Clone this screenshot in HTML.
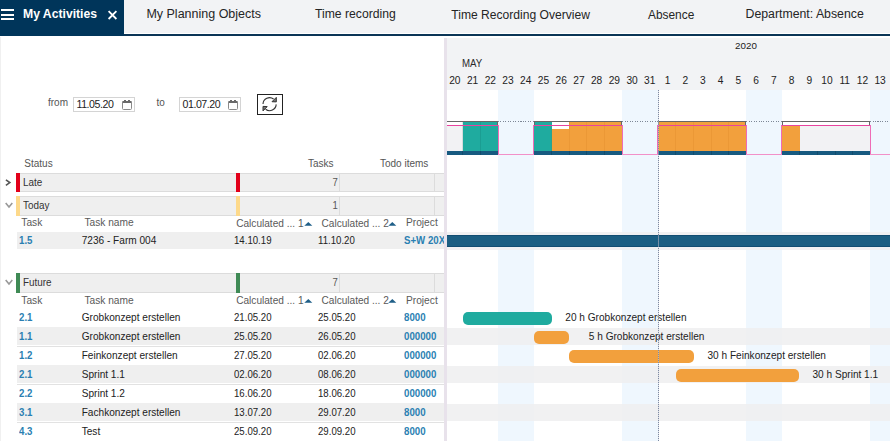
<!DOCTYPE html>
<html><head><meta charset="utf-8"><style>
html,body{margin:0;padding:0;width:890px;height:441px;overflow:hidden;background:#fff;}
body{position:relative;font-family:"Liberation Sans", sans-serif;}
body>div,body>svg{position:absolute;}
</style></head><body>
<div style="left:0.00px;top:0.00px;width:890.00px;height:33.00px;background:#f2f3f5"></div>
<div style="left:0.00px;top:33.00px;width:890.00px;height:1.00px;background:#ffffff"></div>
<div style="left:0.00px;top:34.00px;width:890.00px;height:2.00px;background:#0b3556"></div>
<div style="left:0.00px;top:0.00px;width:124.00px;height:36.00px;background:#00355a"></div>
<div style="left:1.00px;top:9.00px;width:13.00px;height:2.00px;background:#fff"></div>
<div style="left:1.00px;top:13.50px;width:13.00px;height:2.00px;background:#fff"></div>
<div style="left:1.00px;top:18.00px;width:13.00px;height:2.00px;background:#fff"></div>
<div style="left:23.00px;top:7.45px;font-size:12.2px;line-height:14.64px;color:#fff;font-weight:700;white-space:nowrap;">My Activities</div>
<svg style="left:107px;top:10px" width="11" height="10" viewBox="0 0 11 10"><path d="M1.6 1.2 L9.4 9 M9.4 1.2 L1.6 9" stroke="#fff" stroke-width="1.8"/></svg>
<div style="left:146.40px;top:7.17px;font-size:12.5px;line-height:15.0px;color:#252525;font-weight:400;white-space:nowrap;">My Planning Objects</div>
<div style="left:315.00px;top:7.45px;font-size:12.2px;line-height:14.64px;color:#252525;font-weight:400;white-space:nowrap;">Time recording</div>
<div style="left:451.30px;top:7.55px;font-size:12.1px;line-height:14.52px;color:#252525;font-weight:400;white-space:nowrap;">Time Recording Overview</div>
<div style="left:648.00px;top:7.74px;font-size:11.9px;line-height:14.28px;color:#252525;font-weight:400;white-space:nowrap;">Absence</div>
<div style="left:745.50px;top:7.36px;font-size:12.3px;line-height:14.76px;color:#252525;font-weight:400;white-space:nowrap;">Department: Absence</div>
<div style="left:447.00px;top:38.00px;width:443.00px;height:52.00px;background:#f2f3f5"></div>
<div style="left:716.00px;width:60px;text-align:center;top:40.42px;font-size:9.8px;line-height:11.76px;color:#222;font-weight:400;white-space:nowrap;">2020</div>
<div style="left:461.50px;top:57.56px;font-size:10.4px;line-height:12.48px;color:#2a2a2a;font-weight:400;white-space:nowrap;transform:scaleX(0.93);transform-origin:0 0">MAY</div>
<div style="left:424.86px;width:60px;text-align:center;top:74.85px;font-size:10.2px;line-height:12.24px;color:#222;font-weight:400;white-space:nowrap;">20</div>
<div style="left:442.58px;width:60px;text-align:center;top:74.85px;font-size:10.2px;line-height:12.24px;color:#222;font-weight:400;white-space:nowrap;">21</div>
<div style="left:460.30px;width:60px;text-align:center;top:74.85px;font-size:10.2px;line-height:12.24px;color:#222;font-weight:400;white-space:nowrap;">22</div>
<div style="left:478.02px;width:60px;text-align:center;top:74.85px;font-size:10.2px;line-height:12.24px;color:#222;font-weight:400;white-space:nowrap;">23</div>
<div style="left:495.74px;width:60px;text-align:center;top:74.85px;font-size:10.2px;line-height:12.24px;color:#222;font-weight:400;white-space:nowrap;">24</div>
<div style="left:513.46px;width:60px;text-align:center;top:74.85px;font-size:10.2px;line-height:12.24px;color:#222;font-weight:400;white-space:nowrap;">25</div>
<div style="left:531.18px;width:60px;text-align:center;top:74.85px;font-size:10.2px;line-height:12.24px;color:#222;font-weight:400;white-space:nowrap;">26</div>
<div style="left:548.90px;width:60px;text-align:center;top:74.85px;font-size:10.2px;line-height:12.24px;color:#222;font-weight:400;white-space:nowrap;">27</div>
<div style="left:566.62px;width:60px;text-align:center;top:74.85px;font-size:10.2px;line-height:12.24px;color:#222;font-weight:400;white-space:nowrap;">28</div>
<div style="left:584.34px;width:60px;text-align:center;top:74.85px;font-size:10.2px;line-height:12.24px;color:#222;font-weight:400;white-space:nowrap;">29</div>
<div style="left:602.06px;width:60px;text-align:center;top:74.85px;font-size:10.2px;line-height:12.24px;color:#222;font-weight:400;white-space:nowrap;">30</div>
<div style="left:619.78px;width:60px;text-align:center;top:74.85px;font-size:10.2px;line-height:12.24px;color:#222;font-weight:400;white-space:nowrap;">31</div>
<div style="left:637.50px;width:60px;text-align:center;top:74.85px;font-size:10.2px;line-height:12.24px;color:#222;font-weight:400;white-space:nowrap;">1</div>
<div style="left:655.22px;width:60px;text-align:center;top:74.85px;font-size:10.2px;line-height:12.24px;color:#222;font-weight:400;white-space:nowrap;">2</div>
<div style="left:672.94px;width:60px;text-align:center;top:74.85px;font-size:10.2px;line-height:12.24px;color:#222;font-weight:400;white-space:nowrap;">3</div>
<div style="left:690.66px;width:60px;text-align:center;top:74.85px;font-size:10.2px;line-height:12.24px;color:#222;font-weight:400;white-space:nowrap;">4</div>
<div style="left:708.38px;width:60px;text-align:center;top:74.85px;font-size:10.2px;line-height:12.24px;color:#222;font-weight:400;white-space:nowrap;">5</div>
<div style="left:726.10px;width:60px;text-align:center;top:74.85px;font-size:10.2px;line-height:12.24px;color:#222;font-weight:400;white-space:nowrap;">6</div>
<div style="left:743.82px;width:60px;text-align:center;top:74.85px;font-size:10.2px;line-height:12.24px;color:#222;font-weight:400;white-space:nowrap;">7</div>
<div style="left:761.54px;width:60px;text-align:center;top:74.85px;font-size:10.2px;line-height:12.24px;color:#222;font-weight:400;white-space:nowrap;">8</div>
<div style="left:779.26px;width:60px;text-align:center;top:74.85px;font-size:10.2px;line-height:12.24px;color:#222;font-weight:400;white-space:nowrap;">9</div>
<div style="left:796.98px;width:60px;text-align:center;top:74.85px;font-size:10.2px;line-height:12.24px;color:#222;font-weight:400;white-space:nowrap;">10</div>
<div style="left:814.70px;width:60px;text-align:center;top:74.85px;font-size:10.2px;line-height:12.24px;color:#222;font-weight:400;white-space:nowrap;">11</div>
<div style="left:832.42px;width:60px;text-align:center;top:74.85px;font-size:10.2px;line-height:12.24px;color:#222;font-weight:400;white-space:nowrap;">12</div>
<div style="left:850.14px;width:60px;text-align:center;top:74.85px;font-size:10.2px;line-height:12.24px;color:#222;font-weight:400;white-space:nowrap;">13</div>
<div style="left:498.36px;top:90.00px;width:35.44px;height:351.00px;background:#eff7fe"></div>
<div style="left:622.40px;top:90.00px;width:35.44px;height:351.00px;background:#eff7fe"></div>
<div style="left:746.44px;top:90.00px;width:35.44px;height:351.00px;background:#eff7fe"></div>
<div style="left:870.48px;top:90.00px;width:35.44px;height:351.00px;background:#eff7fe"></div>
<div style="left:0.00px;top:37.00px;width:1.00px;height:404.00px;background:#f0f0f0"></div>
<div style="left:48.00px;top:97.03px;font-size:10px;line-height:12.0px;color:#555;font-weight:400;white-space:nowrap;">from</div>
<div style="left:73.00px;top:97.00px;width:62.00px;height:15.00px;border:1px solid #d4d4d4;box-sizing:border-box;background:#fff"></div>
<div style="left:76.50px;top:98.27px;font-size:10.6px;line-height:12.72px;color:#222;font-weight:400;white-space:nowrap;letter-spacing:-0.45px">11.05.20</div>
<svg style="left:122px;top:100px" width="10" height="10" viewBox="0 0 10 10"><rect x="0.5" y="1.5" width="9" height="8" rx="1" fill="none" stroke="#8a8a8a" stroke-width="1"/><rect x="0.5" y="1" width="9" height="2" fill="#6a6a6a"/><rect x="2" y="0" width="2" height="1.5" fill="#6a6a6a"/><rect x="6" y="0" width="2" height="1.5" fill="#6a6a6a"/></svg>
<div style="left:156.60px;top:97.03px;font-size:10px;line-height:12.0px;color:#555;font-weight:400;white-space:nowrap;">to</div>
<div style="left:179.00px;top:97.00px;width:62.00px;height:15.00px;border:1px solid #d4d4d4;box-sizing:border-box;background:#fff"></div>
<div style="left:182.50px;top:98.27px;font-size:10.6px;line-height:12.72px;color:#222;font-weight:400;white-space:nowrap;letter-spacing:-0.45px">01.07.20</div>
<svg style="left:228px;top:100px" width="10" height="10" viewBox="0 0 10 10"><rect x="0.5" y="1.5" width="9" height="8" rx="1" fill="none" stroke="#8a8a8a" stroke-width="1"/><rect x="0.5" y="1" width="9" height="2" fill="#6a6a6a"/><rect x="2" y="0" width="2" height="1.5" fill="#6a6a6a"/><rect x="6" y="0" width="2" height="1.5" fill="#6a6a6a"/></svg>
<div style="left:257.00px;top:94.00px;width:26.00px;height:21.00px;border:1px solid #222;box-sizing:border-box;background:#fff"></div>
<svg style="left:257px;top:94px" width="26" height="21" viewBox="0 0 26 21"><path d="M6.0 10.0 A6.6 6.6 0 0 1 16.6 5.0" fill="none" stroke="#333" stroke-width="1.1"/><path d="M19.3 3.4 L19.3 7.9 L15.0 7.7 Z" fill="#777" stroke="#333" stroke-width="1" stroke-linejoin="round"/><path d="M19.2 10.4 A6.6 6.6 0 0 1 8.6 15.3" fill="none" stroke="#333" stroke-width="1.1"/><path d="M6.0 12.4 L10.2 12.6 L6.0 16.9 Z" fill="#777" stroke="#333" stroke-width="1" stroke-linejoin="round"/></svg>
<div style="left:24.30px;top:157.94px;font-size:10px;line-height:12.0px;color:#555;font-weight:400;white-space:nowrap;">Status</div>
<div style="left:308.00px;top:157.94px;font-size:10px;line-height:12.0px;color:#555;font-weight:400;white-space:nowrap;">Tasks</div>
<div style="left:380.00px;top:157.94px;font-size:10px;line-height:12.0px;color:#555;font-weight:400;white-space:nowrap;">Todo items</div>
<svg style="left:5px;top:179px" width="7" height="8" viewBox="0 0 7 8"><path d="M0.9 0.9 L4.8 3.6 L0.9 6.3" fill="none" stroke="#555" stroke-width="1.6"/></svg>
<div style="left:20.00px;top:173.00px;width:424.00px;height:19.00px;background:#efefef;border-top:1px solid #dcdcdc;border-bottom:1px solid #dcdcdc;box-sizing:border-box"></div>
<div style="left:16.00px;top:173.00px;width:4.00px;height:19.00px;background:#e2001a"></div>
<div style="left:236.00px;top:173.00px;width:3.50px;height:19.00px;background:#e2001a"></div>
<div style="left:339.00px;top:173.00px;width:1.00px;height:19.00px;background:#dcdcdc"></div>
<div style="left:434.00px;top:173.00px;width:1.00px;height:19.00px;background:#dcdcdc"></div>
<div style="left:22.60px;top:176.76px;font-size:10.4px;line-height:12.48px;color:#333;font-weight:400;white-space:nowrap;transform:scaleX(0.95);transform-origin:0 0">Late</div>
<div style="right:552.50px;text-align:right;top:176.17px;font-size:10.6px;line-height:12.72px;color:#555;font-weight:400;white-space:nowrap;transform:scaleX(0.9);transform-origin:100% 0">7</div>
<svg style="left:5px;top:202px" width="8" height="7" viewBox="0 0 8 7"><path d="M0.7 0.9 L4 4.9 L7.3 0.9" fill="none" stroke="#999" stroke-width="1.6"/></svg>
<div style="left:20.00px;top:196.00px;width:424.00px;height:20.00px;background:#efefef;border-top:1px solid #dcdcdc;border-bottom:1px solid #dcdcdc;box-sizing:border-box"></div>
<div style="left:16.00px;top:196.00px;width:4.00px;height:20.00px;background:#fdd98a"></div>
<div style="left:236.00px;top:196.00px;width:3.50px;height:20.00px;background:#fdd98a"></div>
<div style="left:339.00px;top:196.00px;width:1.00px;height:20.00px;background:#dcdcdc"></div>
<div style="left:434.00px;top:196.00px;width:1.00px;height:20.00px;background:#dcdcdc"></div>
<div style="left:22.60px;top:199.76px;font-size:10.4px;line-height:12.48px;color:#333;font-weight:400;white-space:nowrap;transform:scaleX(0.95);transform-origin:0 0">Today</div>
<div style="right:552.50px;text-align:right;top:199.17px;font-size:10.6px;line-height:12.72px;color:#555;font-weight:400;white-space:nowrap;transform:scaleX(0.9);transform-origin:100% 0">1</div>
<svg style="left:5px;top:279px" width="8" height="7" viewBox="0 0 8 7"><path d="M0.7 0.9 L4 4.9 L7.3 0.9" fill="none" stroke="#999" stroke-width="1.6"/></svg>
<div style="left:20.00px;top:273.00px;width:424.00px;height:20.00px;background:#efefef;border-top:1px solid #dcdcdc;border-bottom:1px solid #dcdcdc;box-sizing:border-box"></div>
<div style="left:16.00px;top:273.00px;width:4.00px;height:20.00px;background:#3f8a55"></div>
<div style="left:236.00px;top:273.00px;width:3.50px;height:20.00px;background:#3f8a55"></div>
<div style="left:339.00px;top:273.00px;width:1.00px;height:20.00px;background:#dcdcdc"></div>
<div style="left:434.00px;top:273.00px;width:1.00px;height:20.00px;background:#dcdcdc"></div>
<div style="left:22.60px;top:276.76px;font-size:10.4px;line-height:12.48px;color:#333;font-weight:400;white-space:nowrap;transform:scaleX(0.95);transform-origin:0 0">Future</div>
<div style="right:552.50px;text-align:right;top:276.17px;font-size:10.6px;line-height:12.72px;color:#555;font-weight:400;white-space:nowrap;transform:scaleX(0.9);transform-origin:100% 0">7</div>
<div style="left:21.30px;top:217.45px;font-size:10.2px;line-height:12.24px;color:#5a5a5a;font-weight:400;white-space:nowrap;">Task</div>
<div style="left:84.40px;top:217.45px;font-size:10.2px;line-height:12.24px;color:#5a5a5a;font-weight:400;white-space:nowrap;">Task name</div>
<div style="left:236.20px;top:217.54px;font-size:10.1px;line-height:12.12px;color:#5a5a5a;font-weight:400;white-space:nowrap;">Calculated ... 1</div>
<div style="left:321.50px;top:217.54px;font-size:10.1px;line-height:12.12px;color:#5a5a5a;font-weight:400;white-space:nowrap;">Calculated ... 2</div>
<div style="left:406.00px;top:217.45px;font-size:10.2px;line-height:12.24px;color:#5a5a5a;font-weight:400;white-space:nowrap;">Project</div>
<svg style="left:304px;top:221.50px" width="9" height="4" viewBox="0 0 9 4"><path d="M0.3 3.8 L4.3 0 L8.3 3.8 Z" fill="#1f5f88"/></svg>
<svg style="left:388px;top:221.50px" width="9" height="4" viewBox="0 0 9 4"><path d="M0.3 3.8 L4.3 0 L8.3 3.8 Z" fill="#1f5f88"/></svg>
<div style="left:21.30px;top:294.95px;font-size:10.2px;line-height:12.24px;color:#5a5a5a;font-weight:400;white-space:nowrap;">Task</div>
<div style="left:84.40px;top:294.95px;font-size:10.2px;line-height:12.24px;color:#5a5a5a;font-weight:400;white-space:nowrap;">Task name</div>
<div style="left:236.20px;top:295.04px;font-size:10.1px;line-height:12.12px;color:#5a5a5a;font-weight:400;white-space:nowrap;">Calculated ... 1</div>
<div style="left:321.50px;top:295.04px;font-size:10.1px;line-height:12.12px;color:#5a5a5a;font-weight:400;white-space:nowrap;">Calculated ... 2</div>
<div style="left:406.00px;top:294.95px;font-size:10.2px;line-height:12.24px;color:#5a5a5a;font-weight:400;white-space:nowrap;">Project</div>
<svg style="left:304px;top:299.00px" width="9" height="4" viewBox="0 0 9 4"><path d="M0.3 3.8 L4.3 0 L8.3 3.8 Z" fill="#1f5f88"/></svg>
<svg style="left:388px;top:299.00px" width="9" height="4" viewBox="0 0 9 4"><path d="M0.3 3.8 L4.3 0 L8.3 3.8 Z" fill="#1f5f88"/></svg>
<div style="left:17.00px;top:232.00px;width:427.00px;height:17.00px;background:#efefef"></div>
<div style="left:447.00px;top:232.00px;width:443.00px;height:18.00px;background:rgba(239,239,240,0.85)"></div>
<div style="left:19.40px;top:234.29px;font-size:11px;line-height:13.2px;color:#2a7fb2;font-weight:700;white-space:nowrap;transform:scaleX(0.88);transform-origin:0 0">1.5</div>
<div style="left:81.70px;top:234.74px;font-size:10.1px;line-height:12.12px;color:#222;font-weight:400;white-space:nowrap;">7236 - Farm 004</div>
<div style="left:234.20px;top:234.28px;font-size:10.9px;line-height:13.08px;color:#222;font-weight:400;white-space:nowrap;transform:scaleX(0.885);transform-origin:0 0">14.10.19</div>
<div style="left:318.20px;top:234.28px;font-size:10.9px;line-height:13.08px;color:#222;font-weight:400;white-space:nowrap;transform:scaleX(0.885);transform-origin:0 0">11.10.20</div>
<div style="left:403.6px;top:233.30px;width:40.4px;height:15px;overflow:hidden;white-space:nowrap"><div style="position:absolute;left:0;top:0;font-size:11px;line-height:15px;color:#2a7fb2;font-weight:700;transform:scaleX(0.88);transform-origin:0 0">S+W 20X</div></div>
<div style="left:19.40px;top:311.29px;font-size:11px;line-height:13.2px;color:#2a7fb2;font-weight:700;white-space:nowrap;transform:scaleX(0.88);transform-origin:0 0">2.1</div>
<div style="left:81.70px;top:311.74px;font-size:10.1px;line-height:12.12px;color:#222;font-weight:400;white-space:nowrap;">Grobkonzept erstellen</div>
<div style="left:234.20px;top:311.28px;font-size:10.9px;line-height:13.08px;color:#222;font-weight:400;white-space:nowrap;transform:scaleX(0.885);transform-origin:0 0">21.05.20</div>
<div style="left:318.20px;top:311.28px;font-size:10.9px;line-height:13.08px;color:#222;font-weight:400;white-space:nowrap;transform:scaleX(0.885);transform-origin:0 0">25.05.20</div>
<div style="left:403.6px;top:310.30px;width:40.4px;height:15px;overflow:hidden;white-space:nowrap"><div style="position:absolute;left:0;top:0;font-size:11px;line-height:15px;color:#2a7fb2;font-weight:700;transform:scaleX(0.88);transform-origin:0 0">8000</div></div>
<div style="left:17.00px;top:327.00px;width:427.00px;height:18.00px;background:#efefef"></div>
<div style="left:447.00px;top:328.00px;width:443.00px;height:17.00px;background:rgba(239,239,240,0.85)"></div>
<div style="left:19.40px;top:330.29px;font-size:11px;line-height:13.2px;color:#2a7fb2;font-weight:700;white-space:nowrap;transform:scaleX(0.88);transform-origin:0 0">1.1</div>
<div style="left:81.70px;top:330.74px;font-size:10.1px;line-height:12.12px;color:#222;font-weight:400;white-space:nowrap;">Grobkonzept erstellen</div>
<div style="left:234.20px;top:330.28px;font-size:10.9px;line-height:13.08px;color:#222;font-weight:400;white-space:nowrap;transform:scaleX(0.885);transform-origin:0 0">25.05.20</div>
<div style="left:318.20px;top:330.28px;font-size:10.9px;line-height:13.08px;color:#222;font-weight:400;white-space:nowrap;transform:scaleX(0.885);transform-origin:0 0">26.05.20</div>
<div style="left:403.6px;top:329.30px;width:40.4px;height:15px;overflow:hidden;white-space:nowrap"><div style="position:absolute;left:0;top:0;font-size:11px;line-height:15px;color:#2a7fb2;font-weight:700;transform:scaleX(0.88);transform-origin:0 0">000000</div></div>
<div style="left:17.00px;top:346.00px;width:427.00px;height:1.00px;background:#e2e2e2"></div>
<div style="left:19.40px;top:349.29px;font-size:11px;line-height:13.2px;color:#2a7fb2;font-weight:700;white-space:nowrap;transform:scaleX(0.88);transform-origin:0 0">1.2</div>
<div style="left:81.70px;top:349.74px;font-size:10.1px;line-height:12.12px;color:#222;font-weight:400;white-space:nowrap;">Feinkonzept erstellen</div>
<div style="left:234.20px;top:349.28px;font-size:10.9px;line-height:13.08px;color:#222;font-weight:400;white-space:nowrap;transform:scaleX(0.885);transform-origin:0 0">27.05.20</div>
<div style="left:318.20px;top:349.28px;font-size:10.9px;line-height:13.08px;color:#222;font-weight:400;white-space:nowrap;transform:scaleX(0.885);transform-origin:0 0">02.06.20</div>
<div style="left:403.6px;top:348.30px;width:40.4px;height:15px;overflow:hidden;white-space:nowrap"><div style="position:absolute;left:0;top:0;font-size:11px;line-height:15px;color:#2a7fb2;font-weight:700;transform:scaleX(0.88);transform-origin:0 0">000000</div></div>
<div style="left:17.00px;top:365.00px;width:427.00px;height:18.00px;background:#efefef"></div>
<div style="left:447.00px;top:366.00px;width:443.00px;height:17.00px;background:rgba(239,239,240,0.85)"></div>
<div style="left:19.40px;top:368.29px;font-size:11px;line-height:13.2px;color:#2a7fb2;font-weight:700;white-space:nowrap;transform:scaleX(0.88);transform-origin:0 0">2.1</div>
<div style="left:81.70px;top:368.74px;font-size:10.1px;line-height:12.12px;color:#222;font-weight:400;white-space:nowrap;">Sprint 1.1</div>
<div style="left:234.20px;top:368.28px;font-size:10.9px;line-height:13.08px;color:#222;font-weight:400;white-space:nowrap;transform:scaleX(0.885);transform-origin:0 0">02.06.20</div>
<div style="left:318.20px;top:368.28px;font-size:10.9px;line-height:13.08px;color:#222;font-weight:400;white-space:nowrap;transform:scaleX(0.885);transform-origin:0 0">08.06.20</div>
<div style="left:403.6px;top:367.30px;width:40.4px;height:15px;overflow:hidden;white-space:nowrap"><div style="position:absolute;left:0;top:0;font-size:11px;line-height:15px;color:#2a7fb2;font-weight:700;transform:scaleX(0.88);transform-origin:0 0">000000</div></div>
<div style="left:17.00px;top:384.00px;width:427.00px;height:1.00px;background:#e2e2e2"></div>
<div style="left:19.40px;top:387.29px;font-size:11px;line-height:13.2px;color:#2a7fb2;font-weight:700;white-space:nowrap;transform:scaleX(0.88);transform-origin:0 0">2.2</div>
<div style="left:81.70px;top:387.74px;font-size:10.1px;line-height:12.12px;color:#222;font-weight:400;white-space:nowrap;">Sprint 1.2</div>
<div style="left:234.20px;top:387.28px;font-size:10.9px;line-height:13.08px;color:#222;font-weight:400;white-space:nowrap;transform:scaleX(0.885);transform-origin:0 0">16.06.20</div>
<div style="left:318.20px;top:387.28px;font-size:10.9px;line-height:13.08px;color:#222;font-weight:400;white-space:nowrap;transform:scaleX(0.885);transform-origin:0 0">18.06.20</div>
<div style="left:403.6px;top:386.30px;width:40.4px;height:15px;overflow:hidden;white-space:nowrap"><div style="position:absolute;left:0;top:0;font-size:11px;line-height:15px;color:#2a7fb2;font-weight:700;transform:scaleX(0.88);transform-origin:0 0">000000</div></div>
<div style="left:17.00px;top:403.00px;width:427.00px;height:18.00px;background:#efefef"></div>
<div style="left:447.00px;top:404.00px;width:443.00px;height:17.00px;background:rgba(239,239,240,0.85)"></div>
<div style="left:19.40px;top:406.29px;font-size:11px;line-height:13.2px;color:#2a7fb2;font-weight:700;white-space:nowrap;transform:scaleX(0.88);transform-origin:0 0">3.1</div>
<div style="left:81.70px;top:406.74px;font-size:10.1px;line-height:12.12px;color:#222;font-weight:400;white-space:nowrap;">Fachkonzept erstellen</div>
<div style="left:234.20px;top:406.28px;font-size:10.9px;line-height:13.08px;color:#222;font-weight:400;white-space:nowrap;transform:scaleX(0.885);transform-origin:0 0">13.07.20</div>
<div style="left:318.20px;top:406.28px;font-size:10.9px;line-height:13.08px;color:#222;font-weight:400;white-space:nowrap;transform:scaleX(0.885);transform-origin:0 0">29.07.20</div>
<div style="left:403.6px;top:405.30px;width:40.4px;height:15px;overflow:hidden;white-space:nowrap"><div style="position:absolute;left:0;top:0;font-size:11px;line-height:15px;color:#2a7fb2;font-weight:700;transform:scaleX(0.88);transform-origin:0 0">8000</div></div>
<div style="left:17.00px;top:422.00px;width:427.00px;height:1.00px;background:#e2e2e2"></div>
<div style="left:19.40px;top:425.29px;font-size:11px;line-height:13.2px;color:#2a7fb2;font-weight:700;white-space:nowrap;transform:scaleX(0.88);transform-origin:0 0">4.3</div>
<div style="left:81.70px;top:425.74px;font-size:10.1px;line-height:12.12px;color:#222;font-weight:400;white-space:nowrap;">Test</div>
<div style="left:234.20px;top:425.28px;font-size:10.9px;line-height:13.08px;color:#222;font-weight:400;white-space:nowrap;transform:scaleX(0.885);transform-origin:0 0">25.09.20</div>
<div style="left:318.20px;top:425.28px;font-size:10.9px;line-height:13.08px;color:#222;font-weight:400;white-space:nowrap;transform:scaleX(0.885);transform-origin:0 0">29.09.20</div>
<div style="left:403.6px;top:424.30px;width:40.4px;height:15px;overflow:hidden;white-space:nowrap"><div style="position:absolute;left:0;top:0;font-size:11px;line-height:15px;color:#2a7fb2;font-weight:700;transform:scaleX(0.88);transform-origin:0 0">8000</div></div>
<div style="left:447.00px;top:121.00px;width:51.36px;height:35.00px;background:#fff"></div>
<div style="left:447.00px;top:126.00px;width:15.92px;height:25.00px;background:#f2f2f4"></div>
<div style="left:462.92px;top:122.00px;width:17.72px;height:29.00px;background:#1fab9f"></div>
<div style="left:462.42px;top:122.00px;width:1.00px;height:29.00px;background:rgba(0,60,60,0.12)"></div>
<div style="left:480.64px;top:122.00px;width:17.72px;height:29.00px;background:#1fab9f"></div>
<div style="left:480.14px;top:122.00px;width:1.00px;height:29.00px;background:rgba(0,60,60,0.12)"></div>
<div style="left:447.00px;top:151.00px;width:51.36px;height:4.00px;background:#175a80"></div>
<div style="left:462.42px;top:151.00px;width:1.00px;height:4.00px;background:rgba(0,0,0,0.15)"></div>
<div style="left:480.14px;top:151.00px;width:1.00px;height:4.00px;background:rgba(0,0,0,0.15)"></div>
<div style="left:447.00px;top:121.00px;width:51.36px;height:1.00px;background:#666"></div>
<div style="left:497.36px;top:121.00px;width:1.00px;height:5.00px;background:#666"></div>
<div style="left:447.00px;top:125.00px;width:51.36px;height:1.00px;background:#e8449e"></div>
<div style="left:533.80px;top:121.00px;width:88.60px;height:35.00px;background:#fff"></div>
<div style="left:533.80px;top:122.00px;width:17.72px;height:29.00px;background:#1fab9f"></div>
<div style="left:551.52px;top:129.00px;width:17.72px;height:22.00px;background:#f2a03d"></div>
<div style="left:551.02px;top:129.00px;width:1.00px;height:22.00px;background:rgba(180,90,0,0.10)"></div>
<div style="left:569.24px;top:122.00px;width:17.72px;height:29.00px;background:#f2a03d"></div>
<div style="left:568.74px;top:122.00px;width:1.00px;height:29.00px;background:rgba(180,90,0,0.10)"></div>
<div style="left:586.96px;top:122.00px;width:17.72px;height:29.00px;background:#f2a03d"></div>
<div style="left:586.46px;top:122.00px;width:1.00px;height:29.00px;background:rgba(180,90,0,0.10)"></div>
<div style="left:604.68px;top:122.00px;width:17.72px;height:29.00px;background:#f2a03d"></div>
<div style="left:604.18px;top:122.00px;width:1.00px;height:29.00px;background:rgba(180,90,0,0.10)"></div>
<div style="left:533.80px;top:151.00px;width:88.60px;height:4.00px;background:#175a80"></div>
<div style="left:551.02px;top:151.00px;width:1.00px;height:4.00px;background:rgba(0,0,0,0.15)"></div>
<div style="left:568.74px;top:151.00px;width:1.00px;height:4.00px;background:rgba(0,0,0,0.15)"></div>
<div style="left:586.46px;top:151.00px;width:1.00px;height:4.00px;background:rgba(0,0,0,0.15)"></div>
<div style="left:604.18px;top:151.00px;width:1.00px;height:4.00px;background:rgba(0,0,0,0.15)"></div>
<div style="left:533.80px;top:121.00px;width:88.60px;height:1.00px;background:#666"></div>
<div style="left:533.80px;top:121.00px;width:1.00px;height:5.00px;background:#666"></div>
<div style="left:621.40px;top:121.00px;width:1.00px;height:5.00px;background:#666"></div>
<div style="left:533.80px;top:125.00px;width:88.60px;height:1.00px;background:#e8449e"></div>
<div style="left:657.84px;top:121.00px;width:88.60px;height:35.00px;background:#fff"></div>
<div style="left:657.84px;top:122.00px;width:17.72px;height:29.00px;background:#f2a03d"></div>
<div style="left:675.56px;top:122.00px;width:17.72px;height:29.00px;background:#f2a03d"></div>
<div style="left:675.06px;top:122.00px;width:1.00px;height:29.00px;background:rgba(180,90,0,0.10)"></div>
<div style="left:693.28px;top:122.00px;width:17.72px;height:29.00px;background:#f2a03d"></div>
<div style="left:692.78px;top:122.00px;width:1.00px;height:29.00px;background:rgba(180,90,0,0.10)"></div>
<div style="left:711.00px;top:122.00px;width:17.72px;height:29.00px;background:#f2a03d"></div>
<div style="left:710.50px;top:122.00px;width:1.00px;height:29.00px;background:rgba(180,90,0,0.10)"></div>
<div style="left:728.72px;top:122.00px;width:17.72px;height:29.00px;background:#f2a03d"></div>
<div style="left:728.22px;top:122.00px;width:1.00px;height:29.00px;background:rgba(180,90,0,0.10)"></div>
<div style="left:657.84px;top:151.00px;width:88.60px;height:4.00px;background:#175a80"></div>
<div style="left:675.06px;top:151.00px;width:1.00px;height:4.00px;background:rgba(0,0,0,0.15)"></div>
<div style="left:692.78px;top:151.00px;width:1.00px;height:4.00px;background:rgba(0,0,0,0.15)"></div>
<div style="left:710.50px;top:151.00px;width:1.00px;height:4.00px;background:rgba(0,0,0,0.15)"></div>
<div style="left:728.22px;top:151.00px;width:1.00px;height:4.00px;background:rgba(0,0,0,0.15)"></div>
<div style="left:657.84px;top:121.00px;width:88.60px;height:1.00px;background:#666"></div>
<div style="left:657.84px;top:121.00px;width:1.00px;height:5.00px;background:#666"></div>
<div style="left:745.44px;top:121.00px;width:1.00px;height:5.00px;background:#666"></div>
<div style="left:657.84px;top:125.00px;width:88.60px;height:1.00px;background:#e8449e"></div>
<div style="left:781.88px;top:121.00px;width:88.60px;height:35.00px;background:#fff"></div>
<div style="left:781.88px;top:126.00px;width:17.72px;height:25.00px;background:#f2a03d"></div>
<div style="left:799.60px;top:126.00px;width:17.72px;height:25.00px;background:#f2f2f4"></div>
<div style="left:817.32px;top:126.00px;width:17.72px;height:25.00px;background:#f2f2f4"></div>
<div style="left:835.04px;top:126.00px;width:17.72px;height:25.00px;background:#f2f2f4"></div>
<div style="left:852.76px;top:126.00px;width:17.72px;height:25.00px;background:#f2f2f4"></div>
<div style="left:781.88px;top:151.00px;width:88.60px;height:4.00px;background:#175a80"></div>
<div style="left:799.10px;top:151.00px;width:1.00px;height:4.00px;background:rgba(0,0,0,0.15)"></div>
<div style="left:816.82px;top:151.00px;width:1.00px;height:4.00px;background:rgba(0,0,0,0.15)"></div>
<div style="left:834.54px;top:151.00px;width:1.00px;height:4.00px;background:rgba(0,0,0,0.15)"></div>
<div style="left:852.26px;top:151.00px;width:1.00px;height:4.00px;background:rgba(0,0,0,0.15)"></div>
<div style="left:781.88px;top:121.00px;width:88.60px;height:1.00px;background:#666"></div>
<div style="left:781.88px;top:121.00px;width:1.00px;height:5.00px;background:#666"></div>
<div style="left:869.48px;top:121.00px;width:1.00px;height:5.00px;background:#666"></div>
<div style="left:781.88px;top:125.00px;width:88.60px;height:1.00px;background:#e8449e"></div>
<div style="left:498.36px;top:121.00px;width:35.44px;height:1.00px;background:repeating-linear-gradient(90deg,#7d8796 0 1px,transparent 1px 2.5px)"></div>
<div style="left:497.76px;top:125.00px;width:1.20px;height:30.00px;background:#ee6cb6"></div>
<div style="left:533.20px;top:125.00px;width:1.20px;height:30.00px;background:#ee6cb6"></div>
<div style="left:498.36px;top:154.00px;width:35.44px;height:1.40px;background:#f290c8"></div>
<div style="left:622.40px;top:121.00px;width:35.44px;height:1.00px;background:repeating-linear-gradient(90deg,#7d8796 0 1px,transparent 1px 2.5px)"></div>
<div style="left:621.80px;top:125.00px;width:1.20px;height:30.00px;background:#ee6cb6"></div>
<div style="left:657.24px;top:125.00px;width:1.20px;height:30.00px;background:#ee6cb6"></div>
<div style="left:622.40px;top:154.00px;width:35.44px;height:1.40px;background:#f290c8"></div>
<div style="left:746.44px;top:121.00px;width:35.44px;height:1.00px;background:repeating-linear-gradient(90deg,#7d8796 0 1px,transparent 1px 2.5px)"></div>
<div style="left:745.84px;top:125.00px;width:1.20px;height:30.00px;background:#ee6cb6"></div>
<div style="left:781.28px;top:125.00px;width:1.20px;height:30.00px;background:#ee6cb6"></div>
<div style="left:746.44px;top:154.00px;width:35.44px;height:1.40px;background:#f290c8"></div>
<div style="left:870.48px;top:121.00px;width:35.44px;height:1.00px;background:repeating-linear-gradient(90deg,#7d8796 0 1px,transparent 1px 2.5px)"></div>
<div style="left:869.88px;top:125.00px;width:1.20px;height:30.00px;background:#ee6cb6"></div>
<div style="left:905.32px;top:125.00px;width:1.20px;height:30.00px;background:#ee6cb6"></div>
<div style="left:870.48px;top:154.00px;width:35.44px;height:1.40px;background:#f290c8"></div>
<div style="left:447.00px;top:235.00px;width:443.00px;height:12.00px;background:#1b5e82;border-top:1px solid #124d72;border-bottom:1px solid #124d72;box-sizing:border-box"></div>
<div style="left:463.00px;top:312.00px;width:89.00px;height:13.00px;background:#1fab9f;border-radius:5px"></div>
<div style="left:534.00px;top:331.00px;width:35.00px;height:13.00px;background:#f2a03d;border-radius:5px"></div>
<div style="left:569.00px;top:350.00px;width:125.00px;height:13.00px;background:#f2a03d;border-radius:5px"></div>
<div style="left:676.00px;top:369.00px;width:123.00px;height:13.00px;background:#f2a03d;border-radius:5px"></div>
<div style="left:565.30px;top:311.64px;font-size:10.1px;line-height:12.12px;color:#222;font-weight:400;white-space:nowrap;">20 h Grobkonzept erstellen</div>
<div style="left:588.80px;top:330.64px;font-size:10.1px;line-height:12.12px;color:#222;font-weight:400;white-space:nowrap;">5 h Grobkonzept erstellen</div>
<div style="left:707.50px;top:349.64px;font-size:10.1px;line-height:12.12px;color:#222;font-weight:400;white-space:nowrap;">30 h Feinkonzept erstellen</div>
<div style="left:812.50px;top:368.64px;font-size:10.1px;line-height:12.12px;color:#222;font-weight:400;white-space:nowrap;">30 h Sprint 1.1</div>
<div style="left:657.50px;top:90.00px;width:1.00px;height:351.00px;background:repeating-linear-gradient(180deg,#7d8aa3 0 1px,rgba(200,205,215,0.5) 1px 2px)"></div>
<div style="left:444.00px;top:38.00px;width:3.00px;height:403.00px;background:#e8e2eb"></div>
</body></html>
